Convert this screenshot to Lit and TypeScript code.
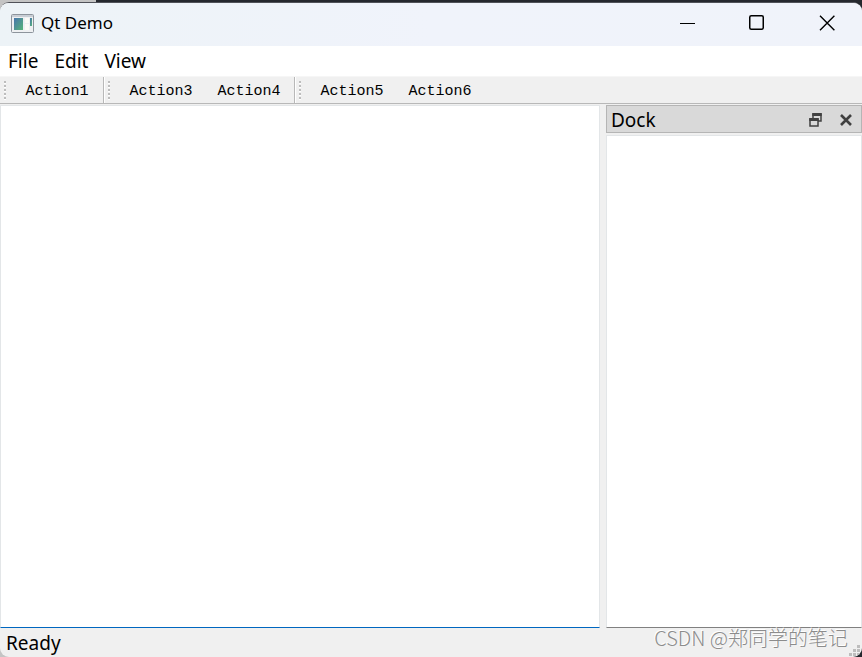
import { LitElement, html, css, svg } from "lit";
import { customElement } from "lit/decorators.js";

const toolbars = [["Action1"], ["Action3", "Action4"], ["Action5", "Action6"]];
const gripDots = [1, 5, 9, 13, 17];
const sizeDots = [[8, 0], [4, 4], [8, 4], [0, 8], [4, 8], [8, 8]];

@customElement("app-root")
export class AppRoot extends LitElement {
  static styles = css`
    :host {
      display: block;
      color: #000;
      font-family: "Noto Sans", "Noto Sans CJK SC", sans-serif;
      font-size: 19px;
      line-height: 24px;
    }
    * { box-sizing: border-box; }
    button {
      margin: 0;
      padding: 0;
      border: 0;
      background: none;
      color: inherit;
      font: inherit;
    }
    svg { display: block; }
    .desktop {
      min-height: 100vh;
      display: flex;
      flex-direction: column;
      padding-top: 2px;
      background: linear-gradient(90deg, #c4c4c4 96px, #25282e 96px);
    }
    .window {
      flex: 1;
      display: flex;
      flex-direction: column;
      overflow: hidden;
      border-top: 1px solid #505259;
      border-radius: 9px;
      background: #f0f0f0;
    }
    .titlebar {
      display: flex;
      height: 43px;
      background: linear-gradient(90deg, #edf3f7, #f0f3fb 50%, #f0f3fa);
    }
    .title {
      flex: 1;
      display: flex;
      align-items: center;
      gap: 7px;
      margin: 0;
      padding: 0 0 3px 11px;
      font-size: 17px;
      font-weight: 400;
    }
    .control {
      width: 70px;
      display: grid;
      place-items: center;
      padding-bottom: 3px;
    }
    .menubar {
      display: flex;
      gap: 16px;
      height: 30px;
      padding: 0 8px;
      background: #fff;
    }
    .toolbars {
      display: flex;
      height: 28px;
      border-top: 1px solid #f6f6f6;
      border-bottom: 1px solid #b8b8b8;
    }
    .toolbar {
      display: flex;
      padding: 0 2px 0 3px;
      border-right: 1px solid #b8b8b8;
    }
    .toolbar + .toolbar {
      padding: 0 1px 0 3px;
      box-shadow: inset 1px 0 #fff;
    }
    .toolbar:last-child { border-right: 0; }
    .grip { margin: 3px 6px 0 0; }
    .action {
      width: 88px;
      padding-top: 3px;
      font-family: "Liberation Mono", monospace;
      font-size: 15px;
    }
    .main {
      flex: 1;
      display: grid;
      grid-template-columns: minmax(0, 1fr) 256px;
      gap: 6px;
      padding-top: 1px;
    }
    .editor {
      display: block;
      width: 100%;
      margin: 0;
      padding: 4px;
      border: 1px solid #e3e6e8;
      border-bottom-color: #808080;
      border-radius: 0;
      outline: 0;
      resize: none;
      background: #fff;
      font: inherit;
    }
    .central { border-bottom-color: #0067c0; }
    .dock {
      display: flex;
      flex-direction: column;
      gap: 2px;
    }
    .dock .editor { flex: 1; }
    .dockbar {
      display: flex;
      align-items: center;
      height: 28px;
      padding: 2px 4px 0;
      border: 1px solid #b5b5b5;
      background: #d9d9d9;
    }
    .dockname {
      flex: 1;
      margin: 0;
      font-size: inherit;
      font-weight: 400;
    }
    .dockbutton {
      width: 22px;
      height: 22px;
      display: grid;
      place-items: center;
    }
    .dockbutton + .dockbutton { margin-left: 9px; }
    .statusbar {
      position: relative;
      display: flex;
      justify-content: space-between;
      height: 29px;
      padding: 3px 14px 0 6px;
    }
    .watermark {
      margin-top: -5px;
      color: #8c8c8c;
      font-family: "Noto Sans CJK SC", sans-serif;
      font-size: 20px;
      font-weight: 300;
      text-shadow: -1px -1px #fff;
    }
    .sizegrip {
      position: absolute;
      right: 2px;
      bottom: 1px;
    }
  `;

  render() {
    return html`
      <div class="desktop">
        <div class="window">
          <header class="titlebar">
            <h1 class="title">
              <svg width="23" height="19" viewBox="0 0 23 19" aria-hidden="true">
                <defs>
                  <linearGradient id="pane" x1="0" y1="0" x2="1" y2="1">
                    <stop offset="0" stop-color="#4775ad" />
                    <stop offset="1" stop-color="#57b578" />
                  </linearGradient>
                </defs>
                <rect x=".5" y=".5" width="22" height="18" rx="1" fill="#eef0f2" stroke="#8d949c" />
                <path d="M1 2h21" stroke="#c8ced5" stroke-width="2" />
                <rect x="3" y="4" width="9" height="12" fill="url(#pane)" />
                <path d="M14 4h4v5h-4zM14 10h4v6h-4z" fill="#fbfbf7" />
                <rect x="19" y="4" width="2" height="8" fill="url(#pane)" />
              </svg>
              Qt Demo
            </h1>
            <button class="control" aria-label="Minimize">
              <svg width="16" height="16"><path d="M1 8.5h15" stroke="#000" /></svg>
            </button>
            <button class="control" aria-label="Maximize">
              <svg width="16" height="16"><rect x=".75" y=".75" width="13.5" height="13.5" rx="1.5" fill="none" stroke="#000" stroke-width="1.5" /></svg>
            </button>
            <button class="control" aria-label="Close">
              <svg width="16" height="16"><path d="M1 .8l14.4 14.4M15.4.8L1 15.2" stroke="#000" stroke-width="1.4" /></svg>
            </button>
          </header>
          <nav class="menubar" aria-label="Menu">
            ${["File", "Edit", "View"].map((name) => html`<button>${name}</button>`)}
          </nav>
          <div class="toolbars">
            ${toolbars.map((names) => html`
              <div class="toolbar" role="toolbar">
                <svg class="grip" width="4" height="20" aria-hidden="true">
                  ${gripDots.map((y) => svg`<rect x="1" y=${y + 1} width="2" height="2" fill="#fff" /><rect x="1" y=${y} width="2" height="2" fill="#bdbdbd" />`)}
                </svg>
                ${names.map((name) => html`<button class="action">${name}</button>`)}
              </div>`)}
          </div>
          <main class="main">
            <textarea class="editor central" aria-label="Document"></textarea>
            <section class="dock">
              <div class="dockbar">
                <h2 class="dockname">Dock</h2>
                <button class="dockbutton" aria-label="Float">
                  <svg width="13" height="14" viewBox="0 0 13 14">
                    <path d="M4 5V1h8v7H9" fill="none" stroke="#404040" stroke-width="1.5" />
                    <path d="M3.3 1.5h9.4" stroke="#404040" stroke-width="3" />
                    <rect x="1" y="6" width="8" height="7" fill="#d9d9d9" stroke="#404040" stroke-width="1.5" />
                    <path d="M.3 6.5h9.4" stroke="#404040" stroke-width="3" />
                  </svg>
                </button>
                <button class="dockbutton" aria-label="Close dock">
                  <svg width="12" height="12"><path d="M1 1l10 10M11 1L1 11" stroke="#404040" stroke-width="2.6" /></svg>
                </button>
              </div>
              <textarea class="editor" aria-label="Dock contents"></textarea>
            </section>
          </main>
          <footer class="statusbar">
            <span>Ready</span>
            <span class="watermark">CSDN @郑同学的笔记</span>
            <svg class="sizegrip" width="11" height="11" aria-hidden="true">
              ${sizeDots.map(([x, y]) => svg`<rect x=${x} y=${y} width="3" height="3" fill="#bdbdbd" />`)}
            </svg>
          </footer>
        </div>
      </div>`;
  }
}
